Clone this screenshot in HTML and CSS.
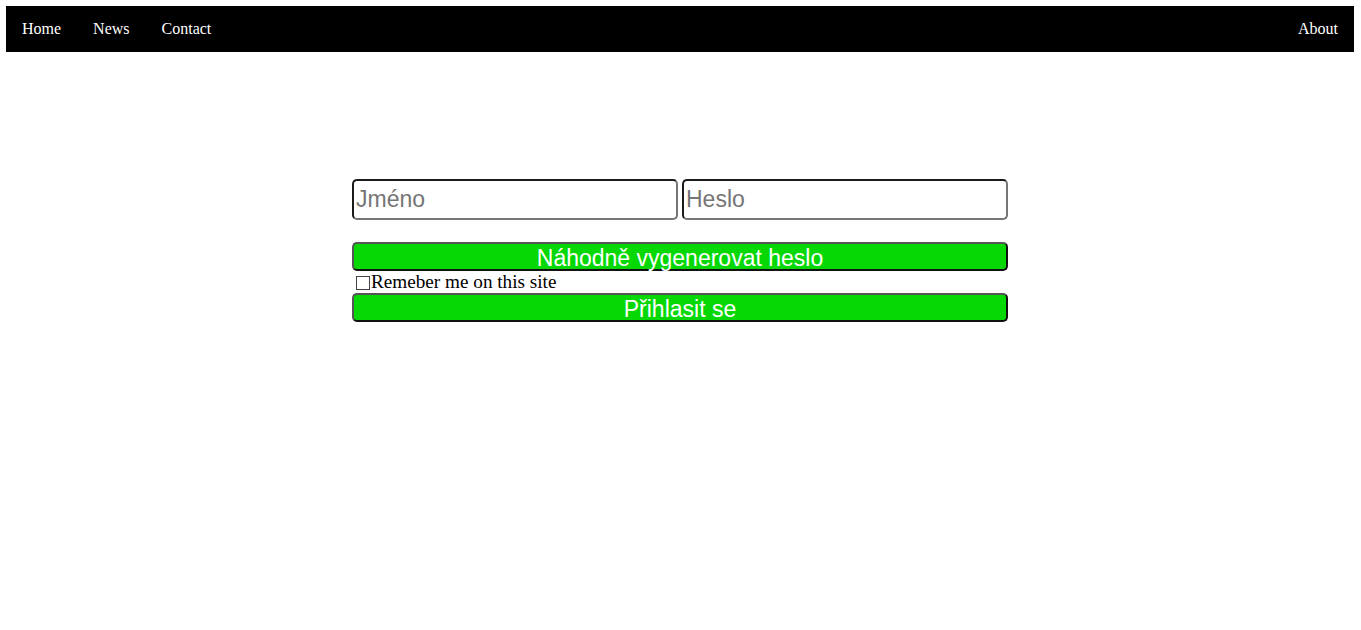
FILE: index.html
```html
<!DOCTYPE html>
<html lang="cs">
<head>
<meta charset="utf-8">
<title>Přihlášení</title>
<link rel="stylesheet" href="styles.css">
</head>
<body>
<nav class="topnav">
  <div class="nav-left">
    <a href="#" class="nav-link">Home</a>
    <a href="#" class="nav-link">News</a>
    <a href="#" class="nav-link">Contact</a>
  </div>
  <a href="#" class="nav-link">About</a>
</nav>
<main class="page">
  <form class="login">
    <div class="fields">
      <input class="field" type="text" placeholder="Jméno">
      <input class="field" type="password" placeholder="Heslo">
    </div>
    <button type="button" class="btn">Náhodně vygenerovat heslo</button>
    <label class="remember"><input type="checkbox" class="check">Remeber me on this site</label>
    <button type="submit" class="btn">Přihlasit se</button>
  </form>
</main>
</body>
</html>
```
FILE: styles.css
```css
html, body {
  background: #fff;
}
body {
  margin: 6px 7px 6px 6px;
  font-family: "Liberation Serif", "Times New Roman", serif;
}
.topnav {
  display: flex;
  justify-content: space-between;
  background: #000;
}
.nav-left {
  display: flex;
}
.nav-link {
  display: block;
  padding: 14px 16px;
  color: #fff;
  text-decoration: none;
  font-size: 16px;
  line-height: 18px;
}
.page {
  display: flex;
  justify-content: center;
  padding-top: 127px;
}
.login {
  width: 656px;
  display: flex;
  flex-direction: column;
}
.fields {
  display: flex;
  gap: 4px;
  margin-bottom: 22px;
}
.field {
  flex: 1;
  min-width: 0;
  box-sizing: border-box;
  height: 41px;
  padding: 1px 2px;
  margin: 0;
  font-family: "Liberation Sans", Arial, sans-serif;
  font-size: 23px;
  color: #000;
  background: #fff;
  border: 2px solid;
  border-color: #1b1b1b #767676 #767676 #1b1b1b;
  border-radius: 5px;
  outline: none;
}
.field::placeholder {
  color: #757575;
}
.btn {
  box-sizing: border-box;
  width: 100%;
  height: 29px;
  margin: 0;
  padding: 3px 0 0;
  background: #05d805;
  color: #fff;
  font-family: "Liberation Sans", Arial, sans-serif;
  font-size: 23px;
  line-height: 22px;
  border: 2px solid;
  border-color: #555 #111 #111 #555;
  border-radius: 5px;
  cursor: pointer;
}
.remember {
  display: flex;
  align-items: center;
  height: 22px;
  font-size: 19.2px;
  color: #000;
}
.check {
  appearance: none;
  -webkit-appearance: none;
  box-sizing: border-box;
  width: 14px;
  height: 14px;
  margin: 1px 1px 0 4px;
  border: 1px solid #444;
  background: #fff;
  border-radius: 0;
}
```
